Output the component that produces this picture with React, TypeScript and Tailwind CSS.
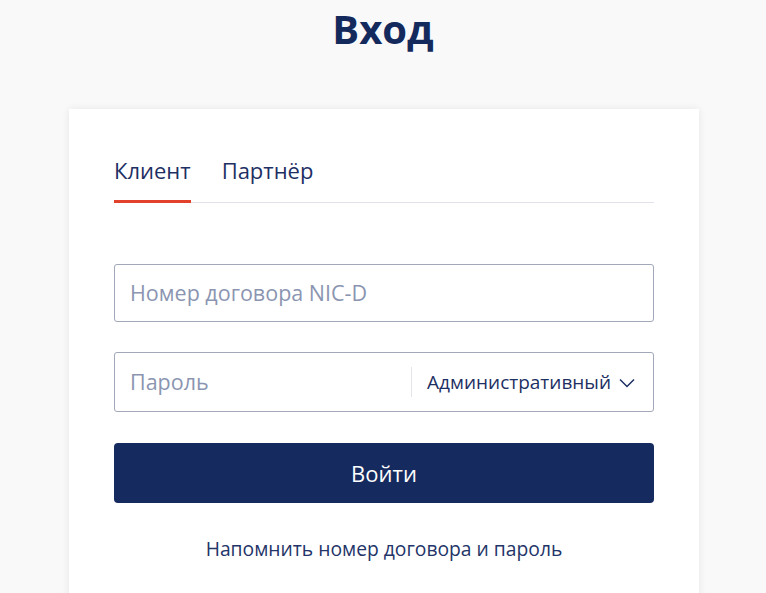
import React from "react";

export default function App() {
  return (
    <div
      className="min-h-[593px] bg-[#f9f9fa] overflow-hidden"
      style={{ fontFamily: '"Open Sans", "Noto Sans", sans-serif' }}
    >
      <h1 className="text-center text-[40px] font-bold leading-[48px] pt-[5px] text-[#142a5d]">
        Вход
      </h1>
      <div className="ml-[69px] mt-[56px] w-[630px] h-[500px] bg-white shadow-[0_0_8px_rgba(0,0,0,0.08)] px-[45px] pt-[46px]">
        <div className="flex gap-[31px] border-b border-[#e2e2ea]">
          <div className="text-[22px] leading-[30px] text-[#1d2f63] pb-[15px] border-b-[3px] border-[#e2422b] -mb-px">
            Клиент
          </div>
          <div className="text-[22px] leading-[30px] text-[#1d2f63] pb-[15px]">
            Партнёр
          </div>
        </div>
        <div className="mt-[61px] h-[58px] border border-[#a2a7ba] rounded-[3px] flex items-center px-[15px]">
          <span className="text-[21.5px] text-[#8b95b1]">Номер договора NIC-D</span>
        </div>
        <div className="mt-[30px] h-[60px] border border-[#a2a7ba] rounded-[3px] flex items-center pl-[15px] pr-[18px]">
          <span className="flex-1 text-[21.5px] text-[#8b95b1]">Пароль</span>
          <div className="h-[30px] w-px bg-[#e4e4ea] mr-[15px]" />
          <span className="text-[19px] text-[#1d2f63]">Административный</span>
          <svg className="ml-[8px] mt-[2px]" width="16" height="10" viewBox="0 0 16 10" fill="none">
            <path d="M1 1.5L8 8.5L15 1.5" stroke="#1d2f63" strokeWidth="1.5" />
          </svg>
        </div>
        <button className="mt-[31px] w-full h-[60px] bg-[#152a5e] rounded-[4px] text-white text-[22px] font-medium">
          Войти
        </button>
        <div className="mt-[32px] text-center text-[19.3px] text-[#233468]">
          Напомнить номер договора и пароль
        </div>
      </div>
    </div>
  );
}
